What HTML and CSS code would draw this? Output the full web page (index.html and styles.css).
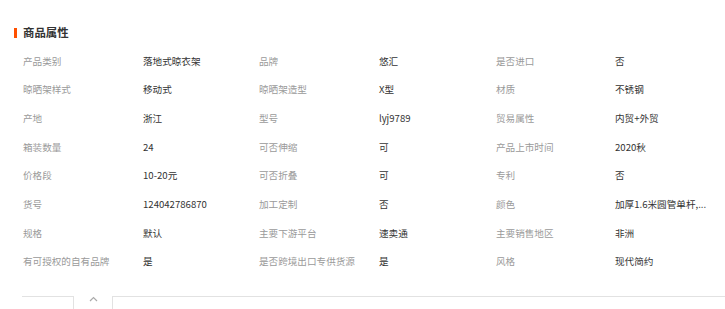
FILE: index.html
```html
<!DOCTYPE html>
<html lang="zh">
<head>
<meta charset="utf-8">
<link rel="stylesheet" href="styles.css">
</head>
<body>
<div class="attrs">
  <div class="title"><span class="bar"></span><span class="title-text">商品属性</span></div>
  <div class="grid">
    <div class="k">产品类别</div><div class="v">落地式晾衣架</div>
    <div class="k">品牌</div><div class="v">悠汇</div>
    <div class="k">是否进口</div><div class="v">否</div>

    <div class="k">晾晒架样式</div><div class="v">移动式</div>
    <div class="k">晾晒架造型</div><div class="v">X型</div>
    <div class="k">材质</div><div class="v">不锈钢</div>

    <div class="k">产地</div><div class="v">浙江</div>
    <div class="k">型号</div><div class="v">lyj9789</div>
    <div class="k">贸易属性</div><div class="v">内贸+外贸</div>

    <div class="k">箱装数量</div><div class="v">24</div>
    <div class="k">可否伸缩</div><div class="v">可</div>
    <div class="k">产品上市时间</div><div class="v">2020秋</div>

    <div class="k">价格段</div><div class="v">10-20元</div>
    <div class="k">可否折叠</div><div class="v">可</div>
    <div class="k">专利</div><div class="v">否</div>

    <div class="k">货号</div><div class="v">124042786870</div>
    <div class="k">加工定制</div><div class="v">否</div>
    <div class="k">颜色</div><div class="v">加厚1.6米圆管单杆,...</div>

    <div class="k">规格</div><div class="v">默认</div>
    <div class="k">主要下游平台</div><div class="v">速卖通</div>
    <div class="k">主要销售地区</div><div class="v">非洲</div>

    <div class="k">有可授权的自有品牌</div><div class="v">是</div>
    <div class="k">是否跨境出口专供货源</div><div class="v">是</div>
    <div class="k">风格</div><div class="v">现代简约</div>
  </div>
  <div class="foot">
    <div class="line"></div>
    <div class="tab"><svg width="9" height="6" viewBox="0 0 9 6"><path d="M1 5 L4.5 1.5 L8 5" fill="none" stroke="#aaa" stroke-width="1.2"/></svg></div>
  </div>
</div>
</body>
</html>
```

FILE: styles.css
```css
html, body {
  margin: 0;
  padding: 0;
  background: #fff;
}
body {
  font-family: "Noto Sans CJK SC", "Liberation Sans", sans-serif;
  overflow: hidden;
}
.attrs {
  width: 725px;
  height: 309px;
  overflow: hidden;
}
.title {
  display: flex;
  align-items: center;
  margin: 26px 0 0 14px;
  height: 13px;
}
.bar {
  width: 3px;
  height: 10px;
  background: #ff5000;
  margin-right: 6px;
}
.title-text {
  font-size: 11.4px;
  font-weight: bold;
  color: #333;
  line-height: 13px;
}
.grid {
  display: grid;
  grid-template-columns: 120px 116px 120px 117px 119px 110px;
  grid-auto-rows: 28.7px;
  margin: 7.5px 0 0 23px;
  font-size: 9.6px;
  line-height: 28.7px;
}
.k {
  color: #9a9a9a;
  white-space: nowrap;
}
.v {
  color: #333;
  white-space: nowrap;
}
.foot {
  position: relative;
  margin: 20px 0 0 22px;
  height: 13px;
}
.line {
  border-top: 1px solid #e2e2e2;
}
.tab {
  position: absolute;
  left: 51px;
  top: 0;
  width: 38px;
  height: 16px;
  background: #fff;
  border: 1px solid #e2e2e2;
  border-top: none;
  border-radius: 0 0 3px 3px;
  display: flex;
  justify-content: center;
  padding-top: 0;
}
.tab svg {
  margin-top: 0;
}
```
